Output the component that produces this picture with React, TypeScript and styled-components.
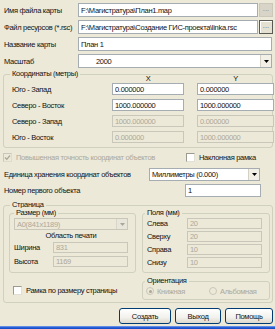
import React from 'react';
import styled, { createGlobalStyle } from 'styled-components';

const BG = '#ECE9D8';
const GREY_TEXT = '#ACA899';

const GlobalStyle = createGlobalStyle`
  html, body {
    margin: 0;
    padding: 0;
    background: ${BG};
  }
  body {
    font-family: 'Liberation Sans', Arial, sans-serif;
    font-size: 7.5px;
    letter-spacing: -0.3px;
    color: #111;
  }
`;

const Window = styled.div`
  width: 275px;
  height: 329px;
  box-sizing: border-box;
  padding: 3px 2px 0 3px;
  display: flex;
  flex-direction: column;
  background: ${BG};
  overflow: hidden;
`;

const Form = styled.div`
  display: flex;
  flex-direction: column;
  gap: 3px;
`;

const FieldRow = styled.div`
  display: grid;
  grid-template-columns: 73px 1fr auto;
  column-gap: 1px;
  align-items: center;
  height: 14px;
  margin-left: 1px;
`;

const Label = styled.span<{ $disabled?: boolean }>`
  white-space: nowrap;
  line-height: 9px;
  color: ${({ $disabled }) => ($disabled ? GREY_TEXT : '#111')};
`;

const TextBox = styled.input<{ $h?: number }>`
  box-sizing: border-box;
  width: 100%;
  height: ${({ $h }) => $h ?? 14}px;
  margin: 0;
  padding: 0 2px;
  font: inherit;
  letter-spacing: inherit;
  color: #111;
  background: #fff;
  border: 1px solid #a5acb2;
  border-radius: 0;
  outline: none;

  &:disabled {
    background: ${BG};
    color: ${GREY_TEXT};
    border-color: #c9c7ba;
  }
`;

const Browse = styled.button<{ $active?: boolean }>`
  box-sizing: border-box;
  width: 14px;
  height: 14px;
  margin: 0;
  padding: 0 0 3px;
  font: inherit;
  line-height: 8px;
  color: ${({ $active }) => ($active ? '#6b6b6b' : '#8a8a80')};
  background: ${({ $active }) => ($active ? '#e4e1d3' : '#d8d5c8')};
  border: 1px solid ${({ $active }) => ($active ? '#5a5a55' : '#cbc8ba')};
  box-shadow: ${({ $active }) => ($active ? 'inset 1px 1px 0 #fff' : 'none')};
`;

const SelectBox = styled.div<{ $h?: number; $w?: number; $pad?: number; $disabled?: boolean }>`
  box-sizing: border-box;
  display: flex;
  align-items: center;
  width: ${({ $w }) => ($w ? `${$w}px` : '100%')};
  height: ${({ $h }) => $h ?? 14}px;
  padding-left: ${({ $pad }) => $pad ?? 2}px;
  background: ${({ $disabled }) => ($disabled ? BG : '#fff')};
  border: 1px solid ${({ $disabled }) => ($disabled ? '#c9c7ba' : '#a5acb2')};
  color: ${({ $disabled }) => ($disabled ? GREY_TEXT : '#111')};
  white-space: nowrap;
`;

const SelectValue = styled.span`
  flex: 1;
  line-height: 9px;
  overflow: hidden;
`;

const ArrowBox = styled.span<{ $disabled?: boolean }>`
  box-sizing: border-box;
  width: 11px;
  height: 100%;
  display: flex;
  align-items: center;
  justify-content: center;
  background: ${({ $disabled }) => ($disabled ? '#e8e6da' : '#f1efe6')};
  border-left: 1px solid ${({ $disabled }) => ($disabled ? '#d8d6ca' : '#d4d1c4')};
`;

const Group = styled.div<{ $pad: string }>`
  box-sizing: border-box;
  border: 1px solid #d0d0bf;
  border-radius: 3px;
  padding: ${({ $pad }) => $pad};
`;

const GroupTitle = styled.div<{ $indent: number }>`
  width: fit-content;
  height: 10px;
  line-height: 10px;
  margin: -6px 0 0 ${({ $indent }) => $indent}px;
  padding: 0 2px;
  background: ${BG};
  white-space: nowrap;
`;

const CoordGroup = styled(Group)`
  margin-top: 6px;
`;

const CoordHeader = styled.div`
  display: grid;
  grid-template-columns: 87px 72px 77px;
  column-gap: 13px;
  height: 6px;
  line-height: 6px;
  margin: -3px 0 1px;
  text-align: center;
`;

const CoordGrid = styled.div`
  display: grid;
  grid-template-columns: 87px 72px 77px;
  grid-auto-rows: 12px;
  column-gap: 13px;
  row-gap: 4px;
  align-items: center;
`;

const CheckLine = styled.div`
  display: grid;
  grid-template-columns: 183px 1fr;
  height: 10px;
  margin-top: 4px;
  align-items: center;
`;

const CheckItem = styled.label`
  display: flex;
  align-items: center;
  gap: 4px;
`;

const Box = styled.span<{ $disabled?: boolean }>`
  box-sizing: border-box;
  flex: none;
  width: 9px;
  height: 9px;
  display: flex;
  align-items: center;
  justify-content: center;
  background: ${({ $disabled }) => ($disabled ? BG : '#fff')};
  border: 1px solid ${({ $disabled }) => ($disabled ? '#c9c7ba' : '#9c9a8e')};
  border-right-color: ${({ $disabled }) => ($disabled ? '#dedccf' : '#e2e0d6')};
  border-bottom-color: ${({ $disabled }) => ($disabled ? '#dedccf' : '#e2e0d6')};
`;

const Radio = styled.span<{ $checked?: boolean }>`
  box-sizing: border-box;
  flex: none;
  width: 8px;
  height: 8px;
  border-radius: 50%;
  border: 1px solid #c9c7ba;
  background: ${BG};
  display: flex;
  align-items: center;
  justify-content: center;

  &::after {
    content: '';
    width: 3px;
    height: 3px;
    border-radius: 50%;
    background: ${({ $checked }) => ($checked ? GREY_TEXT : 'transparent')};
  }
`;

const WideRow = styled.div<{ $top: number; $w: number; $right: number }>`
  display: flex;
  align-items: center;
  justify-content: space-between;
  height: 13px;
  margin-top: ${({ $top }) => $top}px;
  padding-left: 1px;

  & > :last-child {
    width: ${({ $w }) => $w}px;
    margin-right: ${({ $right }) => $right}px;
  }
`;

const PageGroup = styled(Group)`
  margin-top: 8px;
`;

const PageGrid = styled.div`
  display: grid;
  grid-template-columns: 127px 128px;
  grid-template-rows: 60px 19px;
  column-gap: 6px;
  row-gap: 8px;
  margin-top: 3px;
`;

const SizeCaption = styled.div`
  height: 12px;
  line-height: 12px;
  text-align: center;
`;

const SizeRow = styled.div<{ $top: number }>`
  display: grid;
  grid-template-columns: 39px 75px;
  align-items: center;
  height: 11px;
  margin-top: ${({ $top }) => $top}px;
`;

const MarginList = styled.div`
  display: flex;
  flex-direction: column;
  gap: 2px;
  margin-top: 0;
`;

const MarginRow = styled.div`
  display: grid;
  grid-template-columns: 40px 75px;
  align-items: center;
  height: 11px;
`;

const FrameCheck = styled(CheckItem)`
  align-self: center;
  padding-left: 4px;
`;

const RadioLine = styled.div`
  display: grid;
  grid-template-columns: 63px auto;
  height: 10px;
  align-items: center;
`;

const RadioItem = styled.span`
  display: flex;
  align-items: center;
  gap: 3px;
  color: ${GREY_TEXT};
`;

const ButtonBar = styled.div`
  display: flex;
  justify-content: flex-end;
  gap: 4px;
  margin-top: 5px;
`;

const PushButton = styled.button<{ $w: number }>`
  box-sizing: border-box;
  width: ${({ $w }) => $w}px;
  height: 16px;
  margin: 0;
  padding: 0;
  font: inherit;
  letter-spacing: inherit;
  color: #111;
  border: 1px solid #003c74;
  border-radius: 3px;
  background: linear-gradient(#ffffff, #f2f1ec 60%, #dcd8cc);
`;

const BottomFrame = styled.div`
  margin: auto -2px 0 -3px;
  height: 3px;
  background: linear-gradient(#7ba2e7, #2a5fd8 50%, #0d46c0);
`;

const Arrow: React.FC<{ disabled?: boolean }> = ({ disabled }) => (
  <svg width="5" height="3" viewBox="0 0 5 3">
    <path d="M0 0H5L2.5 3Z" fill={disabled ? '#a8a698' : '#000'} />
  </svg>
);

const Tick: React.FC = () => (
  <svg width="7" height="7" viewBox="0 0 7 7">
    <path d="M1 3.5L2.8 5.3L6 1.5" stroke={GREY_TEXT} strokeWidth="1.3" fill="none" />
  </svg>
);

const Select: React.FC<{
  value: string;
  h?: number;
  w?: number;
  pad?: number;
  disabled?: boolean;
}> = ({ value, h, w, pad, disabled }) => (
  <SelectBox $h={h} $w={w} $pad={pad} $disabled={disabled}>
    <SelectValue>{value}</SelectValue>
    <ArrowBox $disabled={disabled}>
      <Arrow disabled={disabled} />
    </ArrowBox>
  </SelectBox>
);

const coords = [
  { label: 'Юго - Запад', x: '0.000000', y: '0.000000', off: false },
  { label: 'Северо - Восток', x: '1000.000000', y: '1000.000000', off: false },
  { label: 'Северо - Запад', x: '1000.000000', y: '0.000000', off: true },
  { label: 'Юго - Восток', x: '0.000000', y: '1000.000000', off: true },
];

const margins = [
  { label: 'Слева', value: '20' },
  { label: 'Сверху', value: '20' },
  { label: 'Справа', value: '10' },
  { label: 'Снизу', value: '10' },
];

export default function App() {
  return (
    <>
      <GlobalStyle />
      <Window>
        <Form>
          <FieldRow>
            <Label>Имя файла карты</Label>
            <TextBox readOnly defaultValue="F:\Магистратура\План1.map" />
            <Browse>...</Browse>
          </FieldRow>
          <FieldRow>
            <Label>Файл ресурсов (*.rsc)</Label>
            <TextBox readOnly defaultValue="F:\Магистратура\Создание ГИС-проекта\linka.rsc" />
            <Browse $active>...</Browse>
          </FieldRow>
          <FieldRow>
            <Label>Название карты</Label>
            <TextBox readOnly defaultValue="План 1" />
            <span />
          </FieldRow>
          <FieldRow>
            <Label>Масштаб</Label>
            <Select value="2000" pad={17} />
            <span />
          </FieldRow>
        </Form>

        <CoordGroup $pad="0 11px 4px 8px">
          <GroupTitle $indent={-2}>Координаты (метры)</GroupTitle>
          <CoordHeader>
            <span />
            <span>X</span>
            <span>Y</span>
          </CoordHeader>
          <CoordGrid>
            {coords.map((c) => (
              <React.Fragment key={c.label}>
                <Label>{c.label}</Label>
                <TextBox $h={12} readOnly disabled={c.off} defaultValue={c.x} />
                <TextBox $h={12} readOnly disabled={c.off} defaultValue={c.y} />
              </React.Fragment>
            ))}
          </CoordGrid>
        </CoordGroup>

        <CheckLine>
          <CheckItem>
            <Box $disabled>
              <Tick />
            </Box>
            <Label $disabled>Повышенная точность координат объектов</Label>
          </CheckItem>
          <CheckItem>
            <Box />
            <Label>Наклонная рамка</Label>
          </CheckItem>
        </CheckLine>

        <WideRow $top={6} $w={111} $right={13}>
          <Label>Единица хранения координат объектов</Label>
          <Select value="Миллиметры (0.000)" h={13} />
        </WideRow>
        <WideRow $top={3} $w={76} $right={12}>
          <Label>Номер первого объекта</Label>
          <TextBox $h={13} readOnly defaultValue="1" />
        </WideRow>

        <PageGroup $pad="0 2px 2px 5px">
          <GroupTitle $indent={1}>Страница</GroupTitle>
          <PageGrid>
            <Group $pad="0 7px 0 4px">
              <GroupTitle $indent={0}>Размер (мм)</GroupTitle>
              <Select value="A0(841x1189)" h={12} disabled />
              <SizeCaption>Область печати</SizeCaption>
              <SizeRow $top={0}>
                <Label>Ширина</Label>
                <TextBox $h={11} disabled defaultValue="831" />
              </SizeRow>
              <SizeRow $top={3}>
                <Label>Высота</Label>
                <TextBox $h={11} disabled defaultValue="1169" />
              </SizeRow>
            </Group>
            <Group $pad="0 7px 0 4px">
              <GroupTitle $indent={-2}>Поля (мм)</GroupTitle>
              <MarginList>
                {margins.map((m) => (
                  <MarginRow key={m.label}>
                    <Label>{m.label}</Label>
                    <TextBox $h={11} disabled defaultValue={m.value} />
                  </MarginRow>
                ))}
              </MarginList>
            </Group>
            <FrameCheck>
              <Box />
              <Label>Рамка по размеру страницы</Label>
            </FrameCheck>
            <Group $pad="0 4px 0 3px">
              <GroupTitle $indent={-1}>Ориентация</GroupTitle>
              <RadioLine>
                <RadioItem>
                  <Radio $checked />
                  Книжная
                </RadioItem>
                <RadioItem>
                  <Radio />
                  Альбомная
                </RadioItem>
              </RadioLine>
            </Group>
          </PageGrid>
        </PageGroup>

        <ButtonBar>
          <PushButton $w={52}>Создать</PushButton>
          <PushButton $w={46}>Выход</PushButton>
          <PushButton $w={48}>Помощь</PushButton>
        </ButtonBar>
        <BottomFrame />
      </Window>
    </>
  );
}
